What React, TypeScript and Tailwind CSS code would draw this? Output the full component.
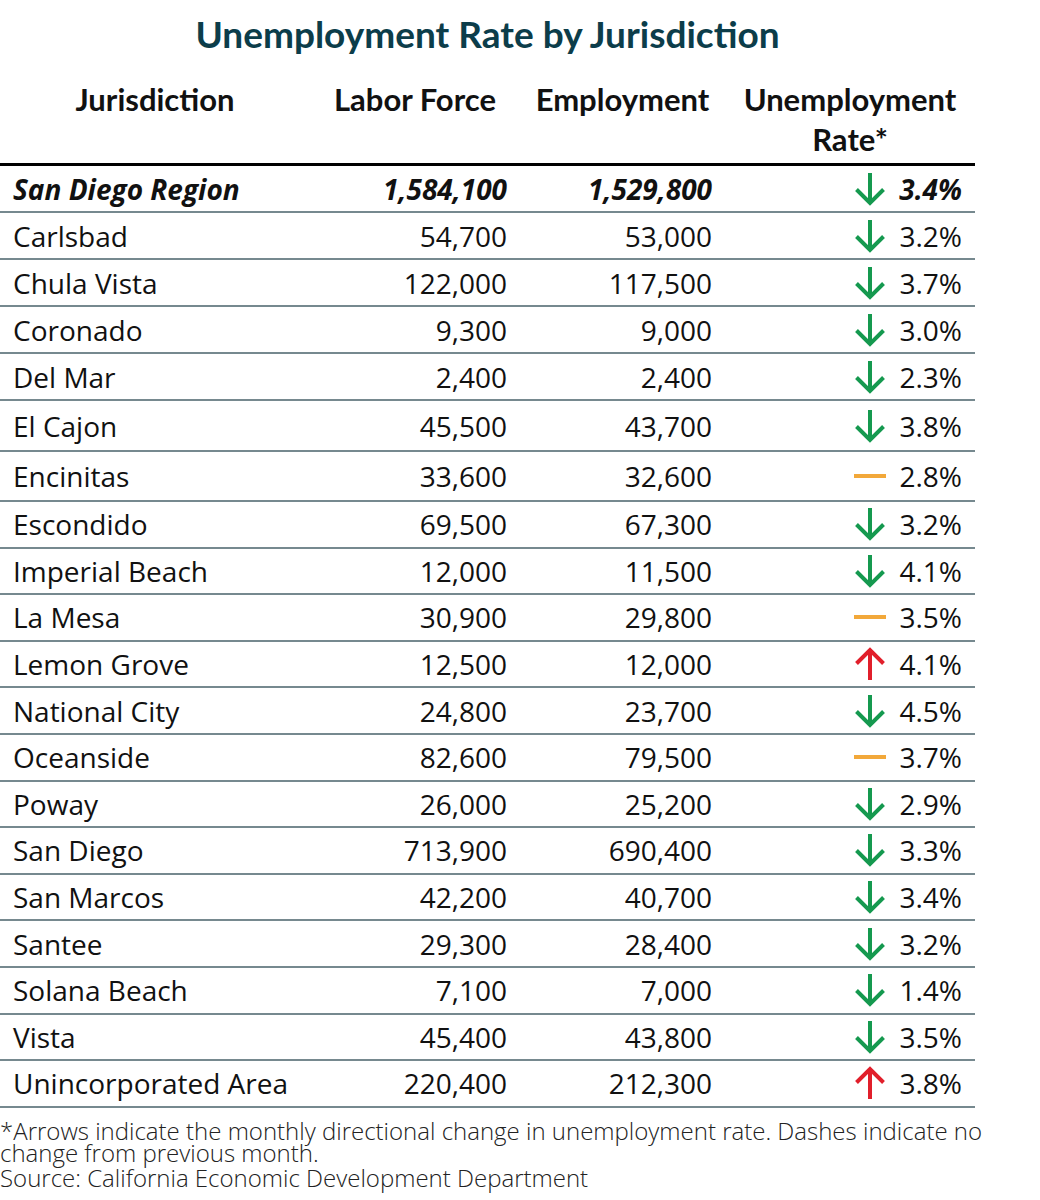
import React from "react";

type Trend = "down" | "up" | "flat";

interface Row {
  name: string;
  labor: string;
  employment: string;
  rate: string;
  trend: Trend;
  h: string;
}

const rows: Row[] = [
  { name: "Carlsbad", labor: "54,700", employment: "53,000", rate: "3.2%", trend: "down", h: "h-[47px]" },
  { name: "Chula Vista", labor: "122,000", employment: "117,500", rate: "3.7%", trend: "down", h: "h-[47px]" },
  { name: "Coronado", labor: "9,300", employment: "9,000", rate: "3.0%", trend: "down", h: "h-[47px]" },
  { name: "Del Mar", labor: "2,400", employment: "2,400", rate: "2.3%", trend: "down", h: "h-[47px]" },
  { name: "El Cajon", labor: "45,500", employment: "43,700", rate: "3.8%", trend: "down", h: "h-[51px]" },
  { name: "Encinitas", labor: "33,600", employment: "32,600", rate: "2.8%", trend: "flat", h: "h-[50px]" },
  { name: "Escondido", labor: "69,500", employment: "67,300", rate: "3.2%", trend: "down", h: "h-[46.6px]" },
  { name: "Imperial Beach", labor: "12,000", employment: "11,500", rate: "4.1%", trend: "down", h: "h-[46.6px]" },
  { name: "La Mesa", labor: "30,900", employment: "29,800", rate: "3.5%", trend: "flat", h: "h-[46.6px]" },
  { name: "Lemon Grove", labor: "12,500", employment: "12,000", rate: "4.1%", trend: "up", h: "h-[46.6px]" },
  { name: "National City", labor: "24,800", employment: "23,700", rate: "4.5%", trend: "down", h: "h-[46.6px]" },
  { name: "Oceanside", labor: "82,600", employment: "79,500", rate: "3.7%", trend: "flat", h: "h-[46.6px]" },
  { name: "Poway", labor: "26,000", employment: "25,200", rate: "2.9%", trend: "down", h: "h-[46.6px]" },
  { name: "San Diego", labor: "713,900", employment: "690,400", rate: "3.3%", trend: "down", h: "h-[46.6px]" },
  { name: "San Marcos", labor: "42,200", employment: "40,700", rate: "3.4%", trend: "down", h: "h-[46.6px]" },
  { name: "Santee", labor: "29,300", employment: "28,400", rate: "3.2%", trend: "down", h: "h-[46.6px]" },
  { name: "Solana Beach", labor: "7,100", employment: "7,000", rate: "1.4%", trend: "down", h: "h-[46.6px]" },
  { name: "Vista", labor: "45,400", employment: "43,800", rate: "3.5%", trend: "down", h: "h-[46.6px]" },
  { name: "Unincorporated Area", labor: "220,400", employment: "212,300", rate: "3.8%", trend: "up", h: "h-[46.6px]" },
];

function TrendIcon({ trend }: { trend: Trend }) {
  if (trend === "flat") {
    return <div className="h-[4px] w-[32px] bg-[#f2a83a]" />;
  }
  const color = trend === "down" ? "#15994f" : "#e11f2b";
  return (
    <svg width="30" height="34" viewBox="0 0 30 34" fill="none">
      {trend === "down" ? (
        <>
          <path d="M15 1 V31" stroke={color} strokeWidth="4" />
          <path d="M1.5 17.5 L15 31 L28.5 17.5" stroke={color} strokeWidth="4" />
        </>
      ) : (
        <>
          <path d="M15 33 V3" stroke={color} strokeWidth="4" />
          <path d="M1.5 16.5 L15 3 L28.5 16.5" stroke={color} strokeWidth="4" />
        </>
      )}
    </svg>
  );
}

const grid = "grid grid-cols-[310px_210px_205px_250px]";
const body = "font-['Open_Sans','Liberation_Sans',sans-serif] text-[28px] text-[#111]";

export default function App() {
  return (
    <div className="w-[1040px] h-[1200px] bg-white overflow-hidden">
      <div className="w-[975px]">
        {/* Title */}
        <div className="h-[68px] flex items-center justify-center">
          <h1 className="font-['Lato',sans-serif] font-bold text-[37px] text-[#0c3d4a]">
            Unemployment Rate by Jurisdiction
          </h1>
        </div>

        {/* Header */}
        <div className={`${grid} h-[98px] border-b-[3px] border-black font-['Lato',sans-serif] font-bold text-[31px] leading-[40px] text-[#111]`}>
          <div className="pt-[11px] text-center">Jurisdiction</div>
          <div className="pt-[11px] text-center">Labor Force</div>
          <div className="pt-[11px] text-center">Employment</div>
          <div className="pt-[11px] text-center">
            Unemployment
            <br />
            Rate*
          </div>
        </div>

        {/* Region total */}
        <div className={`${grid} ${body} h-[47px] border-b-2 border-[#76898f] font-bold italic`}>
          <div className="flex items-center pl-[13px]">San Diego Region</div>
          <div className="flex items-center justify-end pr-[13px]">1,584,100</div>
          <div className="flex items-center justify-end pr-[13px]">1,529,800</div>
          <div className="flex items-center justify-end pr-[13px]">
            <div className="w-[32px] flex justify-center">
              <TrendIcon trend="down" />
            </div>
            <div className="w-[76px] text-right">3.4%</div>
          </div>
        </div>

        {rows.map((r) => (
          <div key={r.name} className={`${grid} ${body} ${r.h} border-b-2 border-[#76898f]`}>
            <div className="flex items-center pl-[13px]">{r.name}</div>
            <div className="flex items-center justify-end pr-[13px]">{r.labor}</div>
            <div className="flex items-center justify-end pr-[13px]">{r.employment}</div>
            <div className="flex items-center justify-end pr-[13px]">
              <div className="w-[32px] flex justify-center">
                <TrendIcon trend={r.trend} />
              </div>
              <div className="w-[76px] text-right">{r.rate}</div>
            </div>
          </div>
        ))}
      </div>

      {/* Footnote */}
      <div className="w-[1015px] pt-[12px] font-['Open_Sans','Liberation_Sans',sans-serif] font-light text-[24px] leading-[22px] text-[#222]">
        <p>*Arrows indicate the monthly directional change in unemployment rate. Dashes indicate no change from previous month.</p>
        <p className="mt-[3px]">Source: California Economic Development Department</p>
      </div>
    </div>
  );
}
